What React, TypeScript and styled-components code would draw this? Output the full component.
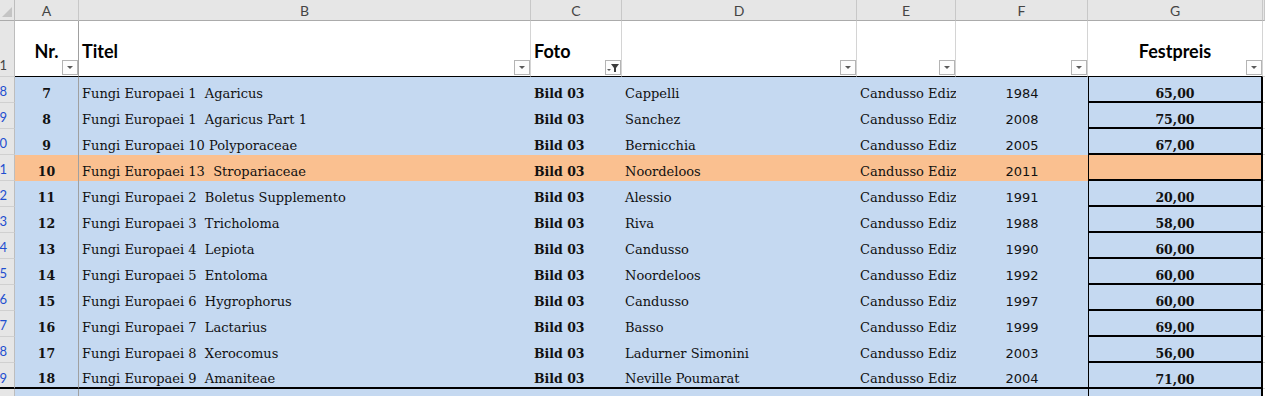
import React from 'react';
import styled, { createGlobalStyle } from 'styled-components';

const COLS = '15px 64px 452px 91px 235px 99px 132px 175px 1fr';

interface IBook {
    row: number;
    nr: number;
    title: string;
    author: string;
    year: number;
    price: string;
    tone?: 'blue' | 'orange';
}

const books: IBook[] = [
    { row: 8, nr: 7, title: 'Fungi Europaei 1  Agaricus', author: 'Cappelli', year: 1984, price: '65,00' },
    { row: 9, nr: 8, title: 'Fungi Europaei 1  Agaricus Part 1', author: 'Sanchez', year: 2008, price: '75,00' },
    { row: 10, nr: 9, title: 'Fungi Europaei 10 Polyporaceae', author: 'Bernicchia', year: 2005, price: '67,00' },
    { row: 11, nr: 10, title: 'Fungi Europaei 13  Stropariaceae', author: 'Noordeloos', year: 2011, price: '', tone: 'orange' },
    { row: 12, nr: 11, title: 'Fungi Europaei 2  Boletus Supplemento', author: 'Alessio', year: 1991, price: '20,00' },
    { row: 13, nr: 12, title: 'Fungi Europaei 3  Tricholoma', author: 'Riva', year: 1988, price: '58,00' },
    { row: 14, nr: 13, title: 'Fungi Europaei 4  Lepiota', author: 'Candusso', year: 1990, price: '60,00' },
    { row: 15, nr: 14, title: 'Fungi Europaei 5  Entoloma', author: 'Noordeloos', year: 1992, price: '60,00' },
    { row: 16, nr: 15, title: 'Fungi Europaei 6  Hygrophorus', author: 'Candusso', year: 1997, price: '60,00' },
    { row: 17, nr: 16, title: 'Fungi Europaei 7  Lactarius', author: 'Basso', year: 1999, price: '69,00' },
    { row: 18, nr: 17, title: 'Fungi Europaei 8  Xerocomus', author: 'Ladurner Simonini', year: 2003, price: '56,00' },
    { row: 19, nr: 18, title: 'Fungi Europaei 9  Amaniteae', author: 'Neville Poumarat', year: 2004, price: '71,00' },
];

const fills = {
    blue: '#c5d9f1',
    orange: '#fac090',
};

// the row header is narrow: only the last digit of the row number shows
const lastDigit = (n: number) => String(n % 10);

const GlobalStyle = createGlobalStyle`
    html, body {
        margin: 0;
        padding: 0;
        background: #fff;
    }
    body {
        width: 1265px;
        height: 396px;
        overflow: hidden;
    }
`;

const Sheet = styled.div`
    width: 1265px;
    height: 396px;
    overflow: hidden;
    background: #fff;
`;

const GridRow = styled.div<{ $h: number }>`
    display: grid;
    grid-template-columns: ${COLS};
    height: ${(p) => p.$h}px;
`;

const Corner = styled.div`
    box-sizing: border-box;
    background: #e6e6e6;
    border-right: 1px solid #bdbdbd;
    border-bottom: 1px solid #ababab;
    display: flex;
    align-items: flex-end;
    justify-content: flex-end;
    padding: 0 1px 3px 0;
`;

const ColLetter = styled.div`
    box-sizing: border-box;
    background: #e6e6e6;
    border-right: 1px solid #c8c8c8;
    border-bottom: 1px solid #ababab;
    display: flex;
    align-items: center;
    justify-content: center;
    font-family: Lato, 'Liberation Sans', sans-serif;
    font-size: 14px;
    color: #444;
    padding-top: 1px;
`;

const RowNum = styled.div<{ $filtered?: boolean; $last?: boolean }>`
    box-sizing: border-box;
    background: #e6e6e6;
    border-right: 1px solid #bdbdbd;
    border-bottom: ${(p) => (p.$last ? '2px solid #000' : '1px solid #d0d0d0')};
    overflow: hidden;
    display: flex;
    align-items: flex-end;
    justify-content: flex-end;
    padding: 0 7px ${(p) => (p.$last ? '1px' : '3px')} 0;
    font-family: Lato, 'Liberation Sans', sans-serif;
    font-size: 13px;
    line-height: 16px;
    white-space: nowrap;
    color: ${(p) => (p.$filtered ? '#1f4fd0' : '#444')};
`;

const HeadCell = styled.div<{ $align?: string; $dark?: boolean }>`
    position: relative;
    box-sizing: border-box;
    background: #fff;
    border-right: 1px solid ${(p) => (p.$dark ? '#a0a0a0' : '#d4d4d4')};
    border-bottom: 1px solid #000;
    display: flex;
    align-items: center;
    justify-content: ${(p) => p.$align || 'flex-start'};
    padding: 4px 3px 0 3px;
    font-family: Lato, 'Liberation Sans', sans-serif;
    font-weight: 700;
    font-size: 18px;
    color: #000;
`;

const FilterButton = styled.div`
    position: absolute;
    right: 0;
    bottom: 1px;
    width: 16px;
    height: 15px;
    box-sizing: border-box;
    border: 1px solid #b4b4b4;
    background: #fdfdfd;
    display: flex;
    align-items: center;
    justify-content: center;
`;

const Cell = styled.div<{
    $fill: string;
    $align?: string;
    $bold?: boolean;
    $sans?: boolean;
    $line?: string;
    $last?: boolean;
}>`
    box-sizing: border-box;
    background: ${(p) => p.$fill};
    border-right: ${(p) => (p.$line ? `1px solid ${p.$line}` : 'none')};
    border-bottom: ${(p) => (p.$last ? '2px solid #000' : 'none')};
    display: flex;
    align-items: flex-end;
    justify-content: ${(p) => p.$align || 'flex-start'};
    padding: 0 3px ${(p) => (p.$last ? '0' : '1px')} 3px;
    font-family: ${(p) => (p.$sans ? "'DejaVu Sans', Verdana, sans-serif" : "'DejaVu Serif', 'Liberation Serif', serif")};
    font-size: ${(p) => (p.$bold ? '12.5px' : '13px')};
    font-weight: ${(p) => (p.$bold ? 700 : 400)};
    line-height: 17px;
    white-space: pre;
    overflow: hidden;
    color: #111;
`;

const PriceCell = styled(Cell)`
    border-left: 1px solid #000;
    border-right: 2px solid #000;
    border-bottom: 2px solid #000;
    justify-content: center;
    padding-bottom: 0;
    line-height: 15px;
`;

const Spare = styled.div<{ $fill?: string }>`
    box-sizing: border-box;
    background: ${(p) => p.$fill || '#fff'};
    border-bottom: 1px solid #d4d4d4;
`;

const DropArrow: React.FC = () => (
    <svg width="14" height="13" viewBox="0 0 14 13">
        <polygon points="4,5 10,5 7,8" fill="#5a5a5a" />
    </svg>
);

const FunnelArrow: React.FC = () => (
    <svg width="14" height="13" viewBox="0 0 14 13">
        <polygon points="5,3 13,3 10,7 10,11 8,11 8,7" fill="#3c3c3c" />
        <polygon points="1,8 5,8 3,10" fill="#5a5a5a" />
    </svg>
);

const SelectAll: React.FC = () => (
    <svg width="12" height="10" viewBox="0 0 12 10">
        <polygon points="11,0 11,10 1,10" fill="#c4c4c4" />
    </svg>
);

const letters = ['A', 'B', 'C', 'D', 'E', 'F', 'G'];

const HeaderRow: React.FC = () => (
    <GridRow $h={56}>
        <RowNum>1</RowNum>
        <HeadCell $align="center" $dark>
            Nr.
            <FilterButton><DropArrow /></FilterButton>
        </HeadCell>
        <HeadCell>
            Titel
            <FilterButton><DropArrow /></FilterButton>
        </HeadCell>
        <HeadCell>
            Foto
            <FilterButton><FunnelArrow /></FilterButton>
        </HeadCell>
        <HeadCell>
            <FilterButton><DropArrow /></FilterButton>
        </HeadCell>
        <HeadCell>
            <FilterButton><DropArrow /></FilterButton>
        </HeadCell>
        <HeadCell>
            <FilterButton><DropArrow /></FilterButton>
        </HeadCell>
        <HeadCell $align="center">
            Festpreis
            <FilterButton><DropArrow /></FilterButton>
        </HeadCell>
        <Spare />
    </GridRow>
);

const BookRow: React.FC<{ book: IBook; last?: boolean }> = ({ book, last }) => {
    const fill = fills[book.tone || 'blue'];
    return (
        <GridRow $h={26}>
            <RowNum $filtered $last={last}>{lastDigit(book.row)}</RowNum>
            <Cell $fill={fill} $align="center" $bold $line="#a0a0a0" $last={last}>{book.nr}</Cell>
            <Cell $fill={fill} $last={last}>{book.title}</Cell>
            <Cell $fill={fill} $bold $last={last}>Bild 03</Cell>
            <Cell $fill={fill} $last={last}>{book.author}</Cell>
            <Cell $fill={fill} $last={last}>Candusso Ediz</Cell>
            <Cell $fill={fill} $align="center" $sans $last={last}>{book.year}</Cell>
            <PriceCell $fill={fill} $bold>{book.price}</PriceCell>
            <Spare />
        </GridRow>
    );
};

const App: React.FC = () => (
    <Sheet>
        <GlobalStyle />
        <GridRow $h={21}>
            <Corner><SelectAll /></Corner>
            {letters.map((l) => (
                <ColLetter key={l}>{l}</ColLetter>
            ))}
            <ColLetter />
        </GridRow>
        <HeaderRow />
        {books.map((b, i) => (
            <BookRow key={b.row} book={b} last={i === books.length - 1} />
        ))}
        <GridRow $h={26}>
            <RowNum $filtered />
            <Cell $fill={fills.blue} $line="#a0a0a0" />
            <Cell $fill={fills.blue} />
            <Cell $fill={fills.blue} />
            <Cell $fill={fills.blue} />
            <Cell $fill={fills.blue} />
            <Cell $fill={fills.blue} />
            <PriceCell $fill={fills.blue} />
            <Spare />
        </GridRow>
    </Sheet>
);

export default App;
